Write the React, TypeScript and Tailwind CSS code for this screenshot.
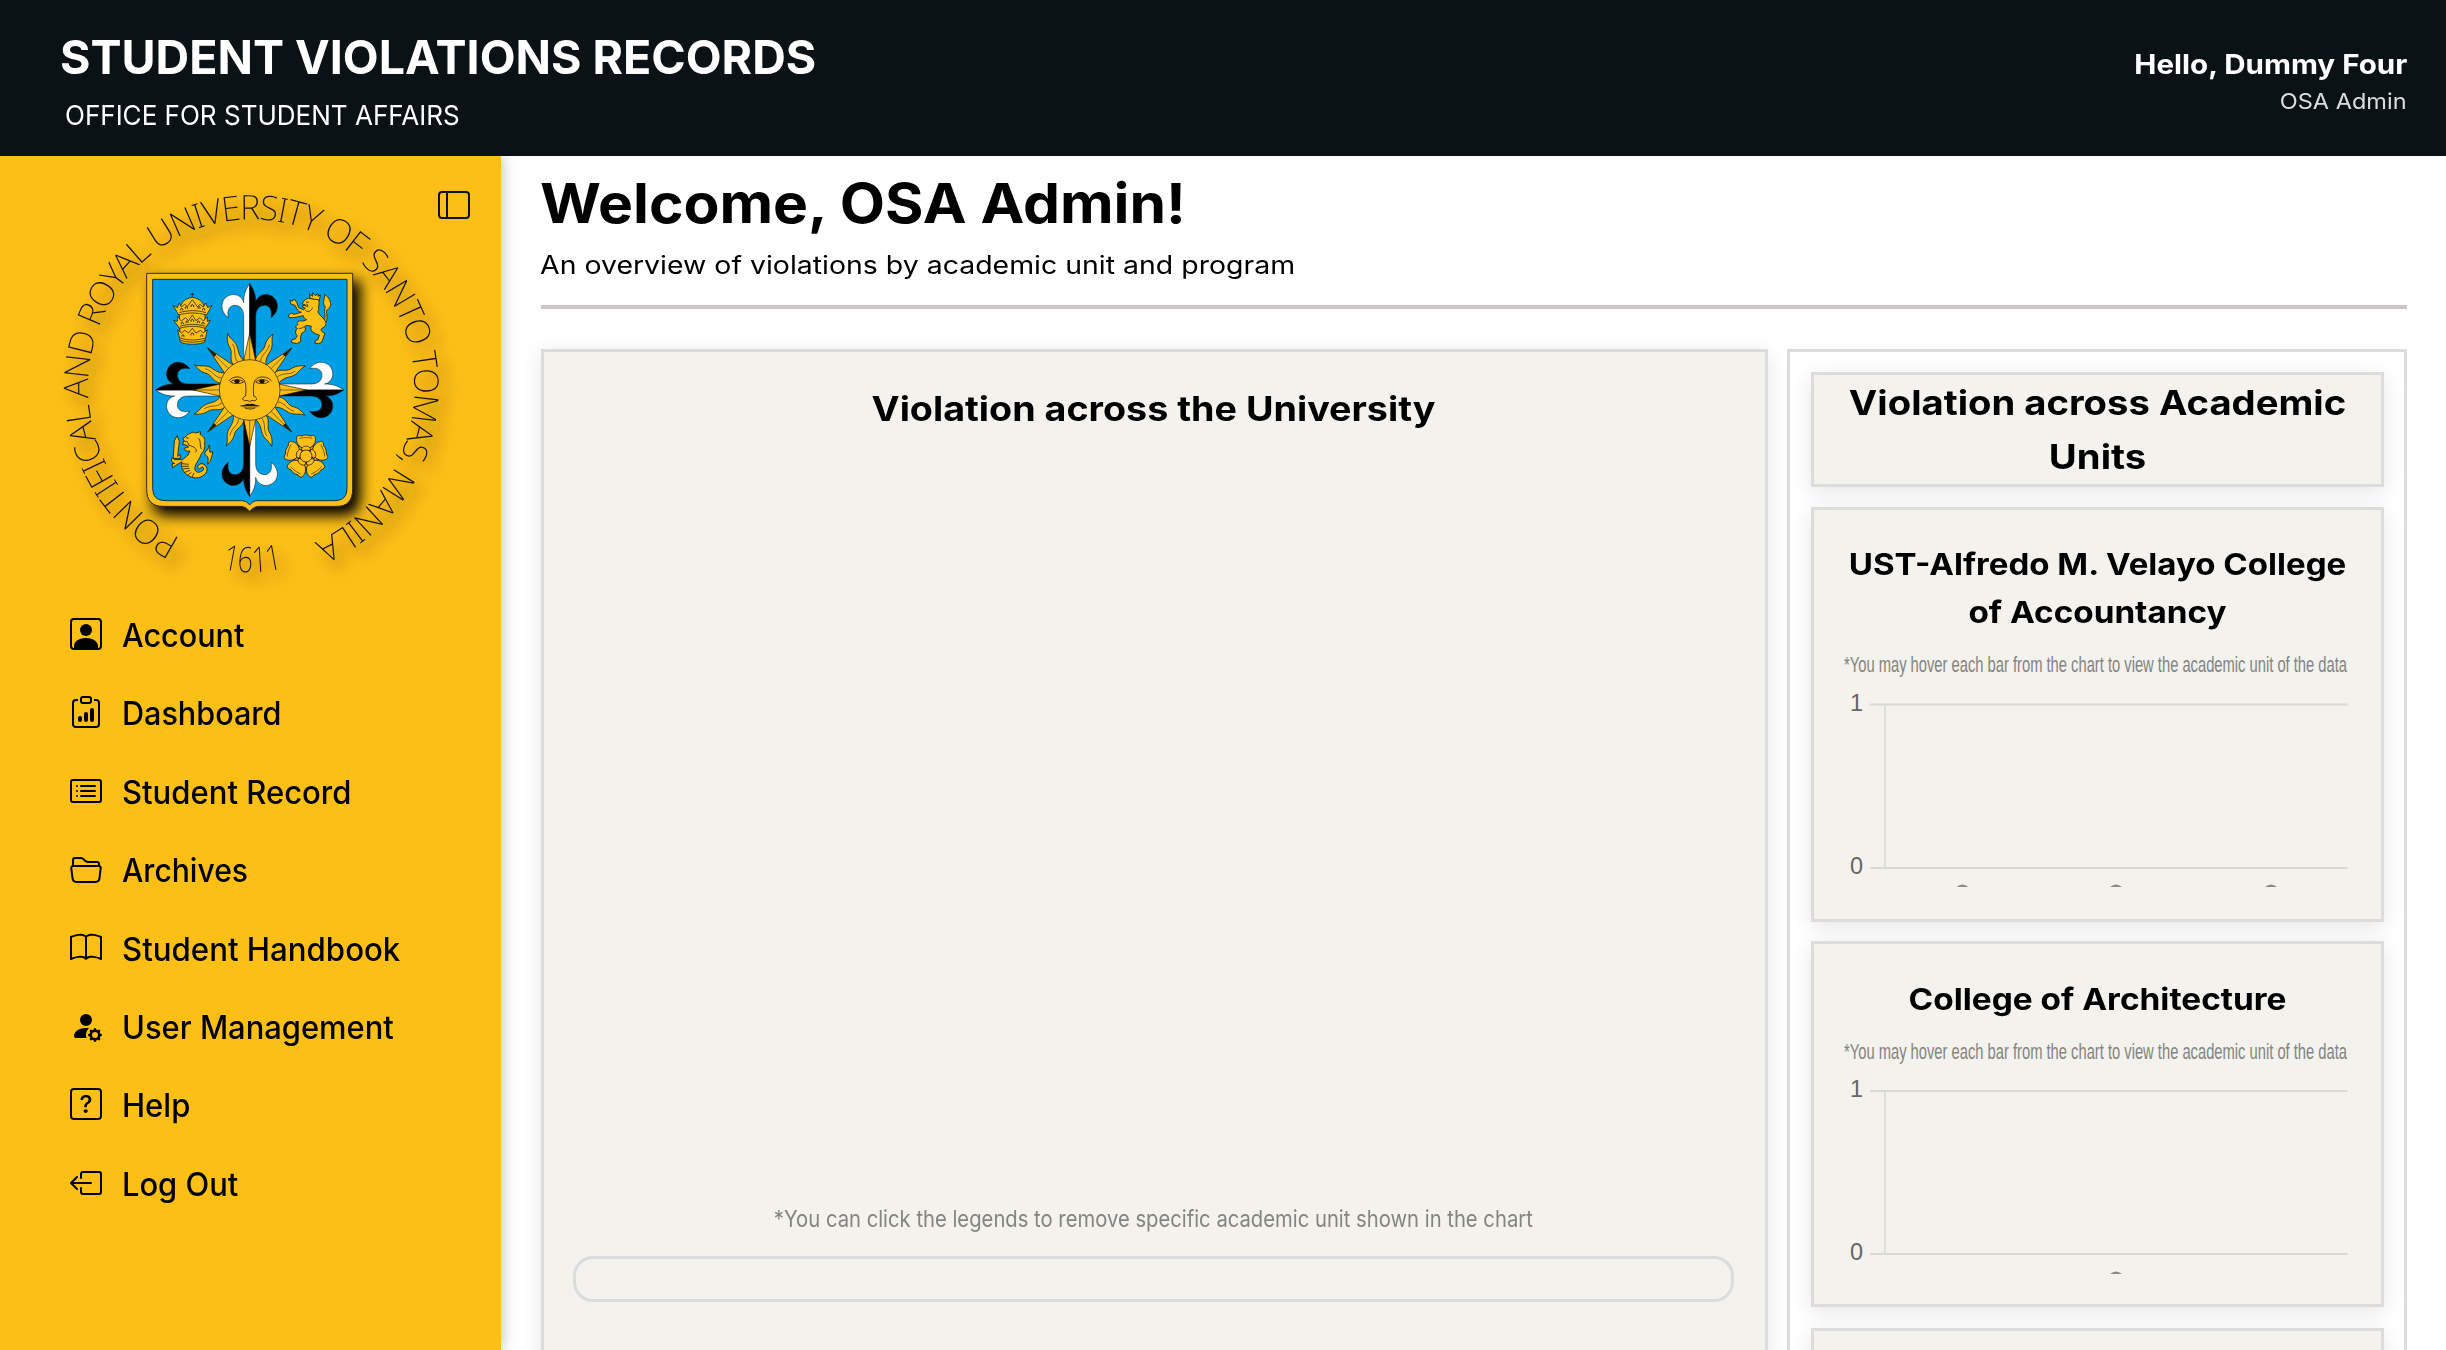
import React from "react";
import type { IconType } from "react-icons";
import {
  BsPersonSquare,
  BsClipboardData,
  BsCardList,
  BsFolder2Open,
  BsBook,
  BsPersonFillGear,
  BsQuestionSquare,
  BsBoxArrowLeft,
  BsLayoutSidebar,
} from "react-icons/bs";

const GOLD = "#fcbf16";

const NAV: { label: string; Icon: IconType; fit: string }[] = [
  { label: "Account", Icon: BsPersonSquare, fit: "scale-x-[0.955]" },
  { label: "Dashboard", Icon: BsClipboardData, fit: "scale-x-[0.955]" },
  { label: "Student Record", Icon: BsCardList, fit: "scale-x-[0.97]" },
  { label: "Archives", Icon: BsFolder2Open, fit: "scale-x-[0.94]" },
  { label: "Student Handbook", Icon: BsBook, fit: "scale-x-[0.975]" },
  { label: "User Management", Icon: BsPersonFillGear, fit: "scale-x-[0.966]" },
  { label: "Help", Icon: BsQuestionSquare, fit: "scale-x-[0.97]" },
  { label: "Log Out", Icon: BsBoxArrowLeft, fit: "scale-x-[0.965]" },
];

/** One arm of the cross, pointing up from the origin: white on its left, black on its right. */
function CrossArm({ turn, inset = 0 }: { turn: number; inset?: number }) {
  const half =
    "M0 -319 C-12 -303 -19 -284 -18 -262 C-22 -284 -48 -293 -67 -281 C-88 -268 -90 -236 -64 -217 C-68 -237 -63 -252 -46 -254 C-28 -254 -18 -242 -18 -220 L-18 -60 L0 -60 Z";
  return (
    <g transform={`rotate(${turn}) translate(0 ${inset})`} stroke="#111" strokeWidth="1.6">
      <path d={half} fill="#fff" />
      <path d={half} fill="#000" transform="scale(-1 1)" />
    </g>
  );
}

function Sun() {
  const cardinal = [0, 90, 180, 270];
  const wavy = [-22, 22, 66, 114, 158, 202, 246, 294];
  const diagonal = [45, 135, 225, 315];
  return (
    <g fill={GOLD} stroke="#1c1500" strokeWidth="2" strokeLinejoin="round">
      {wavy.map((a) => (
        <g key={a} transform={`rotate(${a})`}>
          <path d="M-17 -88 C-24 -112 -2 -122 -8 -144 C-10 -158 -4 -170 2 -182 C2 -164 16 -152 14 -134 C12 -118 8 -106 17 -88 Z" />
          <path d="M-2 -92 C-8 -114 8 -124 4 -148" fill="none" strokeWidth="1.5" />
        </g>
      ))}
      {diagonal.map((a) => (
        <g key={a} transform={`rotate(${a})`}>
          <path d="M-18 -86 L0 -178 L18 -86 Z" />
          <path d="M0 -178 L-5 -146 L5 -146 Z" fill="#1c1500" stroke="none" />
          <path d="M0 -178 V-88" strokeWidth="1.5" />
        </g>
      ))}
      {cardinal.map((a) => (
        <g key={a} transform={`rotate(${a})`}>
          <path d="M-18 -88 L0 -170 L18 -88 Z" />
          <path d="M0 -170 V-88" strokeWidth="1.5" />
        </g>
      ))}
      <circle r="91" />
      <g fill="none" strokeWidth="2.4" strokeLinecap="round">
        <path d="M-62 -28 C-52 -42 -30 -42 -20 -33 C-9 -24 -11 0 -12 18 C-24 22 -23 33 -12 32 C-4 30 -2 34 0 35 C2 34 4 30 12 32 C23 33 24 22 12 18 C11 0 9 -24 20 -33 C30 -42 52 -42 65 -28" />
        <path d="M-58 -24 C-50 -33 -28 -34 -18 -24 C-30 -17 -50 -18 -56 -24 M58 -24 C50 -33 28 -34 18 -24 C30 -17 50 -18 56 -24" />
        <path d="M-14 54 C-6 58 8 58 16 54" />
      </g>
      <ellipse cx="-38" cy="-26" rx="8" ry="6" fill="#1c1500" stroke="none" />
      <ellipse cx="37" cy="-26" rx="8" ry="6" fill="#1c1500" stroke="none" />
      <path
        d="M-29 47 C-18 46 -10 41 -4 41 L0 43 L4 41 C12 41 20 46 31 47 C14 49 -14 49 -29 47 Z"
        fill="#1c1500"
        stroke="none"
      />
      <path d="M-29 47 C-14 54 16 54 31 47" fill="none" strokeWidth="1.5" />
    </g>
  );
}

function Tiara() {
  return (
    <g fill={GOLD} stroke="#1c1500" strokeWidth="2.2" strokeLinejoin="round">
      <path d="M157 83 V97 M151 88 H163" fill="none" />
      <path d="M119 212 C122 150 104 106 157 97 C210 106 190 150 196 212 Z" />
      <path d="M116 150 L99 121 L112 128 L118 114 L124 126 L134 118 L142 125 L157 104 L172 125 L180 118 L190 126 L197 114 L203 128 L216 121 L200 150 C172 142 144 142 116 150 Z" />
      <path d="M119 190 L101 166 L112 169 L112 154 L124 168 L136 158 L146 167 L157 150 L168 167 L180 158 L190 168 L202 155 L202 169 L211 166 L196 190 C172 182 144 182 119 190 Z" />
      <path d="M121 231 L113 194 L124 204 L134 196 L146 204 L157 190 L168 204 L182 196 L190 204 L202 194 L194 231 C176 240 138 240 121 231 Z" />
      <path
        d="M118 143 C144 135 172 135 198 143 M120 184 C144 176 172 176 196 184 M120 219 C144 227 172 227 196 219 M121 226 C144 233 172 233 195 226"
        fill="none"
      />
      <g fill="none" strokeWidth="3">
        <path d="M122 136 c-2 -8 8 -8 6 0 M136 131 c-2 -8 8 -8 6 0 M153 126 c-2 -9 10 -9 8 0 M174 131 c-2 -8 8 -8 6 0 M188 136 c-2 -8 8 -8 6 0" />
        <path d="M124 178 c-2 -8 8 -8 6 0 M138 174 c-2 -8 8 -8 6 0 M153 170 c-2 -9 10 -9 8 0 M172 174 c-2 -8 8 -8 6 0 M186 178 c-2 -8 8 -8 6 0" />
        <path d="M126 215 c-2 -7 8 -7 6 0 M153 211 c-2 -9 10 -9 8 0 M182 215 c-2 -7 8 -7 6 0" />
      </g>
    </g>
  );
}

function Lion() {
  return (
    <g fill={GOLD} stroke="#1c1500" strokeWidth="2.4" strokeLinejoin="round">
      <path d="M541 180 C566 168 548 140 556 126 C544 112 556 100 554 88 C566 96 574 110 572 122 C570 130 562 132 560 136 C558 154 570 168 544 184" />
      <path d="M511 101 L508 87 L518 94 L518 83 L526 92 L534 86 L534 94 L541 90 L538 107 Z" />
      <path d="M492 108 C498 100 508 98 516 102 L536 104 C540 116 534 124 536 134 C530 140 538 148 546 156 C562 172 562 182 546 190 C540 196 544 200 555 205 L545 232 L536 236 L524 234 L526 227 L534 224 L538 210 C522 206 508 198 514 184 C504 180 496 180 494 186 C500 196 492 202 486 204 L482 214 L482 230 L470 236 L454 232 L456 224 L466 222 L472 212 C464 206 466 196 472 190 L466 186 L474 178 C466 170 478 166 490 168 L500 164 C490 160 490 154 490 152 L462 158 L447 158 L446 150 L454 144 L462 148 L484 142 C474 140 470 132 466 122 L452 116 L450 106 L458 108 L463 102 L470 112 L476 128 L490 134 L496 130 L488 126 L488 122 L496 120 L486 116 Z" />
      <path d="M498 111 L506 112 M494 122 L504 124 L500 116 M496 136 C506 144 514 136 518 128 M476 190 C484 192 490 186 494 184" fill="none" />
    </g>
  );
}

function SeaLion() {
  return (
    <g fill={GOLD} stroke="#1c1500" strokeWidth="2.4" strokeLinejoin="round">
      <path d="M100 574 L103 528 L111 512 L118 528 L113 574 L121 568 L121 580 L99 580 Z" />
      <path d="M203 598 C210 560 190 580 196 560 C204 556 206 548 208 540 C212 552 206 556 210 562 L219 560 C214 574 214 590 203 598 Z" />
      <path d="M143 508 C152 506 158 498 166 504 L182 500 L180 508 C194 516 196 524 194 534 C196 548 192 560 184 566 C180 580 172 588 168 598 C160 612 166 622 176 622 C190 620 194 612 188 606 C182 604 182 614 176 612 C170 606 176 596 186 596 C202 600 206 618 194 628 C180 642 158 642 142 630 C126 618 122 604 126 590 L106 602 L98 608 L96 596 L104 596 L94 588 L96 578 L104 584 L128 584 L144 570 L150 558 C140 560 134 556 132 550 L146 546 L138 540 L128 538 L132 526 L128 520 L136 516 Z" />
      <path
        d="M138 518 L146 520 M130 528 L142 530 L146 540 L156 544 C168 548 172 558 166 562 M176 520 C184 530 178 540 184 552 M126 596 L146 598 M124 604 L146 604 M128 612 L148 610 M134 622 L150 616 M144 630 L154 622 M156 636 L162 624"
        fill="none"
      />
    </g>
  );
}

function Rose() {
  const turns = [0, 72, 144, 216, 288];
  return (
    <g transform="translate(498 573)" fill={GOLD} stroke="#1c1500" strokeWidth="2.2" strokeLinejoin="round">
      {turns.map((a) => (
        <g key={a} transform={`rotate(${a})`}>
          <path d="M-14 -24 C-24 -34 -30 -42 -28 -52 C-30 -60 -22 -64 -14 -60 C-4 -64 4 -64 14 -60 C22 -64 30 -60 28 -52 C30 -42 24 -34 14 -24 Z" />
          <path d="M-19 -53 C-8 -56 8 -56 19 -53" fill="none" strokeWidth="1.6" />
        </g>
      ))}
      {turns.map((a) => (
        <path key={a} transform={`rotate(${a + 36})`} d="M-6 -24 L0 -38 L6 -24 Z" />
      ))}
      {turns.map((a) => (
        <path key={a} transform={`rotate(${a})`} d="M-12 -16 C-20 -34 20 -34 12 -16 Z" />
      ))}
      <circle r="18" />
      {turns.map((a) => (
        <path key={a} transform={`rotate(${a + 36})`} d="M0 -18 V-27" />
      ))}
    </g>
  );
}

function UniversitySeal() {
  return (
    <svg width="460" height="420" viewBox="0 0 1380 1260" className="block shrink-0 overflow-visible" aria-label="University seal">
      <defs>
        <path id="motto" d="M421.7 1106.2 A489 504 0 1 1 846.3 1106.2" />
        <path id="year" d="M546 1196 Q635 1218 728 1196" />
        <filter id="textGlow" x="-20%" y="-20%" width="140%" height="140%">
          <feDropShadow dx="22" dy="28" stdDeviation="22" floodColor="#3a2a00" floodOpacity="0.75" />
        </filter>
        <filter id="shieldShadow" x="-30%" y="-30%" width="170%" height="170%">
          <feGaussianBlur stdDeviation="20" />
        </filter>
      </defs>

      <g filter="url(#textGlow)" fill="#1a1300" fontFamily="'Noto Sans', sans-serif" fontWeight="200">
        <text fontSize="102" textLength="2705" lengthAdjust="spacing">
          <textPath href="#motto" textLength="2705" lengthAdjust="spacing">
            PONTIFICAL AND ROYAL UNIVERSITY OF SANTO TOMAS, MANILA
          </textPath>
        </text>
        <text fontSize="106">
          <textPath href="#year" textLength="184" lengthAdjust="spacingAndGlyphs">
            1611
          </textPath>
        </text>
      </g>

      <g transform="translate(300 285)">
        <path d="M40 46 H662 V694 Q660 752 614 752 H80 Q36 750 36 704 Z" fill="#000" filter="url(#shieldShadow)" />
        <path
          d="M20 25 H638 V670 C638 708 622 724 590 724 H362 C346 724 340 728 329 739 C318 728 312 724 296 724 H70 C36 724 20 708 20 670 Z"
          fill={GOLD}
          stroke="#3a2c05"
          strokeWidth="3"
        />
        <path
          d="M38 43 H621 V665 C621 694 612 707 580 707 H354 C342 707 336 711 329 720 C322 711 316 707 304 707 H80 C48 707 38 694 38 665 Z"
          fill="#009fe5"
          stroke="#14304a"
          strokeWidth="3"
        />
        <g transform="translate(329 375)">
          <CrossArm turn={0} />
          <CrossArm turn={90} inset={37} />
          <CrossArm turn={180} />
          <CrossArm turn={270} inset={37} />
          <Sun />
        </g>
        <Tiara />
        <Lion />
        <SeaLion />
        <Rose />
      </g>
    </svg>
  );
}

function Sidebar() {
  return (
    <aside className="relative z-10 flex w-[501px] shrink-0 flex-col bg-[#fcbf16] shadow-[0_0_14px_rgba(0,0,0,0.3)]">
      <BsLayoutSidebar className="absolute top-[33px] left-[438px] z-10 size-8 text-[#0b1215]" />
      <div className="flex h-[462px] pt-[14px] pl-10">
        <UniversitySeal />
      </div>
      <nav className="flex flex-col pl-[70px] text-black">
        {NAV.map(({ label, Icon, fit }) => (
          <a key={label} className="flex h-[78.4px] items-start gap-5">
            <Icon className="size-8 shrink-0" />
            <span className={`${fit} origin-left text-[32px] leading-[36px] font-medium whitespace-nowrap`}>{label}</span>
          </a>
        ))}
      </nav>
    </aside>
  );
}

type ChartProps = {
  top: number;
  height: number;
  hintY: number;
  oneY: number;
  zeroY: number;
  labels: number[];
};

/** Empty bar chart: two horizontal grid lines, one axis and the clipped tops of its labels. */
function EmptyChart({ top, height, hintY, oneY, zeroY, labels }: ChartProps) {
  return (
    <svg
      width="540"
      height={height}
      viewBox={`1827 ${top} 540 ${height}`}
      className="mx-auto block"
      fontFamily="'Liberation Sans', Arial, sans-serif"
    >
      <text x="1844" y={hintY} fontSize="21.5" fill="#848482" textLength="503" lengthAdjust="spacingAndGlyphs">
        *You may hover each bar from the chart to view the academic unit of the data
      </text>
      <g fontSize="23.5" fill="#666" textAnchor="end">
        <text x="1863" y={oneY + 6}>1</text>
        <text x="1863" y={zeroY + 6}>0</text>
      </g>
      <g stroke="#d9d9d6" strokeWidth="2">
        <path d={`M1870 ${oneY} H2347.5 M1870 ${zeroY} H2347.5`} />
        <path d={`M1885 ${oneY} V${zeroY}`} strokeWidth="1.6" />
      </g>
      {labels.map((x) => (
        <path key={x} d={`M${x - 6} ${top + height} Q${x} ${top + height - 5} ${x + 6} ${top + height} Z`} fill="#8a8a88" />
      ))}
    </svg>
  );
}

const cardBase = "border-[3px] border-[#dcdcdc] bg-[#f3f2ec] shadow-[0_5px_20px_rgba(0,0,0,0.1)]";

export default function App() {
  return (
    <div className="flex h-[1350px] w-[2446px] flex-col overflow-hidden bg-white font-[Inter,sans-serif] text-black">
      <header className="z-20 flex h-[156px] shrink-0 items-start justify-between bg-[#0b1215] pr-[39px] pl-[60px] text-white">
        <div className="flex flex-col items-start pt-[27px]">
          <h1 className="origin-left scale-x-[0.99] text-[47px] leading-[60px] font-bold whitespace-nowrap">
            STUDENT VIOLATIONS RECORDS
          </h1>
          <p className="mt-[11px] ml-[5px] origin-left scale-x-[0.964] text-[27px] leading-[36px] whitespace-nowrap">
            OFFICE FOR STUDENT AFFAIRS
          </p>
        </div>
        <div className="flex flex-col items-end pt-[45px]">
          <p className="origin-right scale-x-[1.095] text-[27px] leading-[40px] font-bold whitespace-nowrap">
            Hello, Dummy Four
          </p>
          <p className="origin-right scale-x-[1.07] text-[22px] leading-[32px] whitespace-nowrap text-[#dcdddd]">
            OSA Admin
          </p>
        </div>
      </header>

      <div className="flex min-h-0 flex-1">
        <Sidebar />

        <main className="flex min-w-0 flex-1 flex-col pr-[39px] pl-10">
          <h2 className="mt-[10px] -ml-px w-fit origin-left scale-x-[1.068] text-[55px] leading-[74px] font-bold whitespace-nowrap">
            Welcome, OSA Admin!
          </h2>
          <p className="mt-[7px] -ml-px w-fit origin-left scale-x-[1.138] text-[25px] leading-[36px] whitespace-nowrap">
            An overview of violations by academic unit and program
          </p>
          <div className="mt-[22px] h-1 shrink-0 bg-[#cdc6c6]" />

          <div className="mt-10 flex min-h-0 flex-1 gap-[19px]">
            <section className={`${cardBase} flex h-[1200px] w-[1227px] shrink-0 flex-col items-center pt-[30px] pr-[31px] pl-[29px]`}>
              <h3 className="scale-x-[1.108] text-[34px] leading-[54px] font-bold whitespace-nowrap">
                Violation across the University
              </h3>
              <p className="mt-[765px] scale-x-[0.88] text-[23px] leading-[36px] whitespace-nowrap text-[#848482]">
                *You can click the legends to remove specific academic unit shown in the chart
              </p>
              <div className="mt-[19px] h-[46px] w-full shrink-0 rounded-[20px] border-[3px] border-[#dcdcdc]" />
            </section>

            <section className="flex h-[1200px] w-[620px] shrink-0 flex-col border-[3px] border-[#dcdcdc] bg-white px-[20.5px] pt-[20px]">
              <div className={`${cardBase} h-[115px] shrink-0 text-center text-[34px] leading-[55px] font-bold`}>
                <p className="scale-x-[1.124] whitespace-nowrap">Violation across Academic</p>
                <p className="scale-x-[1.124] leading-[53px]">Units</p>
              </div>

              <div className={`${cardBase} mt-[20px] flex h-[415px] shrink-0 flex-col pt-[30px] text-center`}>
                <p className="scale-x-[1.102] text-[30px] leading-[48px] font-bold whitespace-nowrap">
                  UST-Alfredo M. Velayo College
                </p>
                <p className="scale-x-[1.11] text-[30px] leading-[48px] font-bold">of Accountancy</p>
                <EmptyChart top={636} height={251} hintY={672} oneY={704.5} zeroY={868} labels={[1962.5, 2116, 2271]} />
              </div>

              <div className={`${cardBase} mt-[19px] flex h-[366px] shrink-0 flex-col pt-[31px] text-center`}>
                <p className="scale-x-[1.113] text-[30px] leading-[48px] font-bold">College of Architecture</p>
                <EmptyChart top={1023} height={251} hintY={1059} oneY={1091} zeroY={1254} labels={[2116]} />
              </div>

              <div className={`${cardBase} mt-[21px] h-[366px] shrink-0`} />
            </section>
          </div>
        </main>
      </div>
    </div>
  );
}
